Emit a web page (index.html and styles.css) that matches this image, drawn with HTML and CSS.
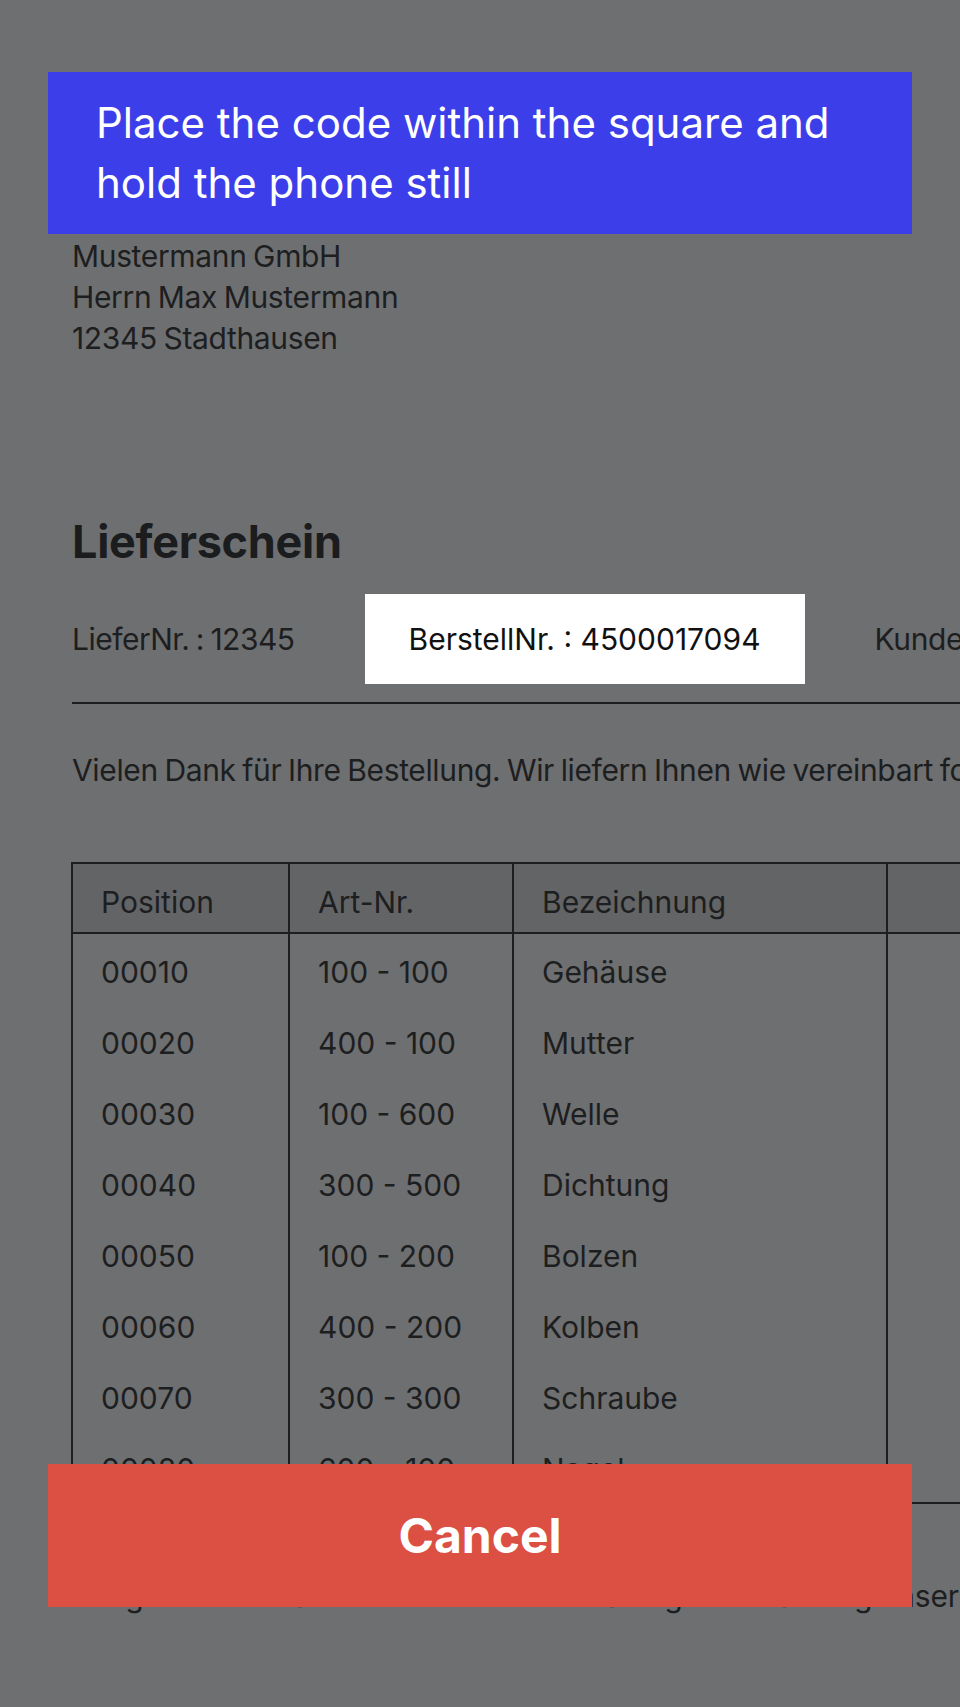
FILE: index.html
```html
<!DOCTYPE html>
<html lang="de">
<head>
<meta charset="utf-8">
<title>Scanner</title>
<link rel="stylesheet" href="styles.css">
</head>
<body>
<main class="doc">
  <div class="address">
    <div>Mustermann GmbH</div>
    <div>Herrn Max Mustermann</div>
    <div>12345 Stadthausen</div>
  </div>
  <h1 class="title">Lieferschein</h1>
  <div class="info">
    <span class="info-item first">LieferNr. : 12345</span>
    <span class="info-item focus">BerstellNr. : 4500017094</span>
    <span class="info-item">KundeNr. : 987654</span>
  </div>
  <hr class="rule">
  <p class="intro">Vielen Dank für Ihre Bestellung. Wir liefern Ihnen wie vereinbart folgende Artikel:</p>
  <table class="items">
    <colgroup>
      <col class="c1"><col class="c2"><col class="c3"><col class="c4">
    </colgroup>
    <thead>
      <tr><th>Position</th><th>Art-Nr.</th><th>Bezeichnung</th><th class="num">Menge</th></tr>
    </thead>
    <tbody>
      <tr><td>00010</td><td>100 - 100</td><td>Gehäuse</td><td class="num">10</td></tr>
      <tr><td>00020</td><td>400 - 100</td><td>Mutter</td><td class="num">20</td></tr>
      <tr><td>00030</td><td>100 - 600</td><td>Welle</td><td class="num">5</td></tr>
      <tr><td>00040</td><td>300 - 500</td><td>Dichtung</td><td class="num">15</td></tr>
      <tr><td>00050</td><td>100 - 200</td><td>Bolzen</td><td class="num">30</td></tr>
      <tr><td>00060</td><td>400 - 200</td><td>Kolben</td><td class="num">2</td></tr>
      <tr><td>00070</td><td>300 - 300</td><td>Schraube</td><td class="num">50</td></tr>
      <tr><td>00080</td><td>600 - 100</td><td>Nagel</td><td class="num">100</td></tr>
    </tbody>
  </table>
  <p class="note">Die gelieferte Ware bleibt bis zur vollständigen Bezahlung unser Eigentum.</p>
</main>
<div class="hint">Place the code within the square and hold the phone still</div>
<button class="cancel" type="button">Cancel</button>
</body>
</html>
```
FILE: styles.css
```css
html, body {
  margin: 0;
  padding: 0;
  width: 960px;
  height: 1707px;
  overflow: hidden;
}
body {
  position: relative;
  background: #6e6f71;
  font-family: Inter, "Noto Sans", sans-serif;
  color: #1d1e20;
}
.doc {
  padding: 236px 0 0 72px;
  font-size: 30px;
  line-height: 41px;
  white-space: nowrap;
}
.address,
.info,
.intro {
  letter-spacing: -0.35px;
  word-spacing: -1.5px;
}
.info .first {
  letter-spacing: -0.5px;
}
.note {
  letter-spacing: -0.15px;
  word-spacing: -1px;
}
.address div {
  height: 41px;
}
.title {
  margin: 153px 0 0;
  font-size: 45px;
  line-height: 60px;
  font-weight: 700;
  letter-spacing: -0.3px;
  color: #1b1c1e;
}
.info {
  margin-top: 22px;
  display: flex;
  align-items: center;
  gap: 26px;
  height: 90px;
}
.info-item {
  padding: 0 44px;
  height: 90px;
  display: flex;
  align-items: center;
  flex: none;
}
.info-item.first {
  padding-left: 0;
}
.info-item.focus {
  background: #ffffff;
  color: #111111;
  letter-spacing: 0;
  word-spacing: 0;
}
.rule {
  margin: 18px 0 0;
  border: 0;
  height: 2px;
  width: 1200px;
  background: #1d1e20;
}
.intro {
  margin: 46px 0 0;
}
.items {
  margin: 71px 0 0 -1px;
  border-collapse: collapse;
  table-layout: fixed;
  width: 1200px;
  border: 2px solid #1d1e20;
}
.c1 { width: 217px; }
.c2 { width: 224px; }
.c3 { width: 374px; }
.c4 { width: 385px; }
.items th,
.items td {
  border-left: 2px solid #1d1e20;
  border-right: 2px solid #1d1e20;
  text-align: left;
  font-weight: 400;
  padding: 18px 0 0 28px;
  vertical-align: top;
}
.items th {
  background: #636466;
  height: 50px;
  border-bottom: 2px solid #1d1e20;
}
.items td {
  height: 53px;
}
.items .num {
  text-align: right;
  padding-right: 28px;
}
.note {
  margin: 72px 0 0;
}
.hint {
  position: absolute;
  top: 72px;
  left: 48px;
  width: 816px;
  height: 120px;
  padding: 21px 0 21px 48px;
  background: #3c3fe9;
  color: #ffffff;
  font-size: 42px;
  line-height: 60px;
}
.cancel {
  position: absolute;
  top: 1464px;
  left: 48px;
  width: 864px;
  height: 143px;
  margin: 0;
  border: 0;
  padding: 0;
  background: #dc5043;
  color: #ffffff;
  font-family: Inter, "Noto Sans", sans-serif;
  font-size: 48px;
  font-weight: 700;
  display: flex;
  align-items: center;
  justify-content: center;
}
```
